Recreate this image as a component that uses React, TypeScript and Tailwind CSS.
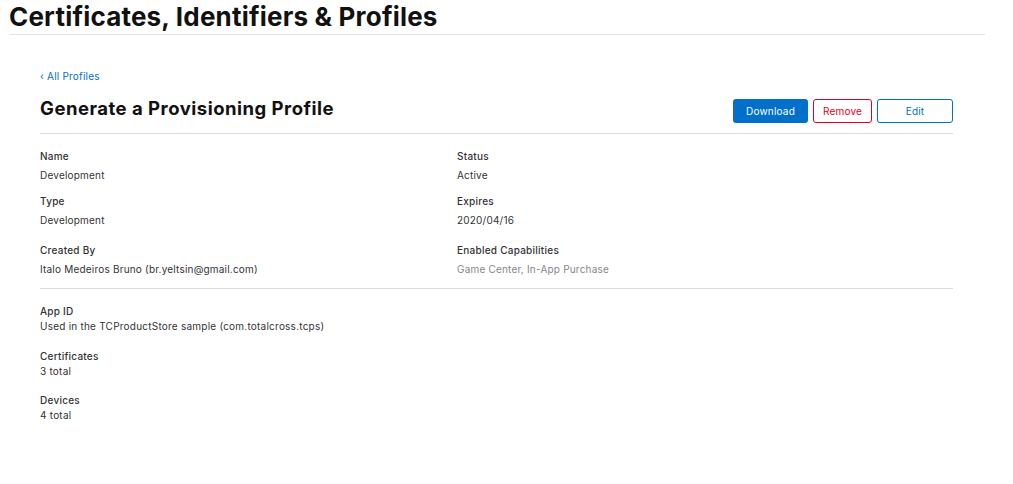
import React from "react";

const font = { fontFamily: "Inter, 'Noto Sans', sans-serif" };

function Field({ label, value, muted }: { label: string; value: string; muted?: boolean }) {
  return (
    <div>
      <div className="text-[10px] leading-[14px] font-medium tracking-[0.25px] text-[#333336]">{label}</div>
      <div className={`mt-[5px] text-[10px] leading-[14px] tracking-[0.2px] ${muted ? "text-[#86868b]" : "text-[#333336]"}`}>{value}</div>
    </div>
  );
}

function Field2({ label, value }: { label: string; value: string }) {
  return (
    <div>
      <div className="text-[10px] leading-[14px] font-medium tracking-[0.25px] text-[#333336]">{label}</div>
      <div className="mt-[1px] text-[10px] leading-[14px] tracking-[0.23px] text-[#333336]">{value}</div>
    </div>
  );
}

export default function App() {
  return (
    <div className="w-[1013px] h-[484px] bg-white overflow-hidden" style={font}>
      <div className="ml-[9px] w-[976px] border-b border-[#e2e2e2]">
        <h1 className="text-[26px] leading-[34px] font-bold text-[#111111] tracking-[0.2px]">
          Certificates, Identifiers &amp; Profiles
        </h1>
      </div>
      <div className="ml-[40px] w-[913px]">
        <a className="block mt-[34px] text-[10px] leading-[14px] tracking-[0.2px] text-[#0070c9]">‹ All Profiles</a>
        <div className="flex justify-between items-start mt-[12px]">
          <h2 className="mt-[1px] text-[18.5px] leading-[24px] font-bold tracking-[0.5px] text-[#111111]">Generate a Provisioning Profile</h2>
          <div className="flex gap-[5px] mt-[4px]">
            <button className="w-[75px] h-[24px] rounded-[3px] bg-[#0070c9] text-white text-[10px] tracking-[0.2px]">Download</button>
            <button className="w-[59px] h-[24px] rounded-[3px] border border-[#e30022] text-[#e30022] text-[10px] tracking-[0.2px]">Remove</button>
            <button className="w-[76px] h-[24px] rounded-[3px] border border-[#0070c9] text-[#0070c9] text-[10px] tracking-[0.2px]">Edit</button>
          </div>
        </div>
        <div className="mt-[10px] border-t border-[#dcdcdc]" />
        <div className="grid grid-cols-[417px_1fr] pt-[15px] pb-[12px] border-b border-[#dcdcdc]">
          <div className="flex flex-col">
            <Field label="Name" value="Development" />
            <div className="mt-[12px]"><Field label="Type" value="Development" /></div>
            <div className="mt-[16px]"><Field label="Created By" value="Italo Medeiros Bruno (br.yeltsin@gmail.com)" /></div>
          </div>
          <div className="flex flex-col">
            <Field label="Status" value="Active" />
            <div className="mt-[12px]"><Field label="Expires" value="2020/04/16" /></div>
            <div className="mt-[16px]"><Field label="Enabled Capabilities" value="Game Center, In-App Purchase" muted /></div>
          </div>
        </div>
        <div className="pt-[15px] flex flex-col">
          <Field2 label="App ID" value="Used in the TCProductStore sample (com.totalcross.tcps)" />
          <div className="mt-[16px]"><Field2 label="Certificates" value="3 total" /></div>
          <div className="mt-[15px]"><Field2 label="Devices" value="4 total" /></div>
        </div>
      </div>
    </div>
  );
}
